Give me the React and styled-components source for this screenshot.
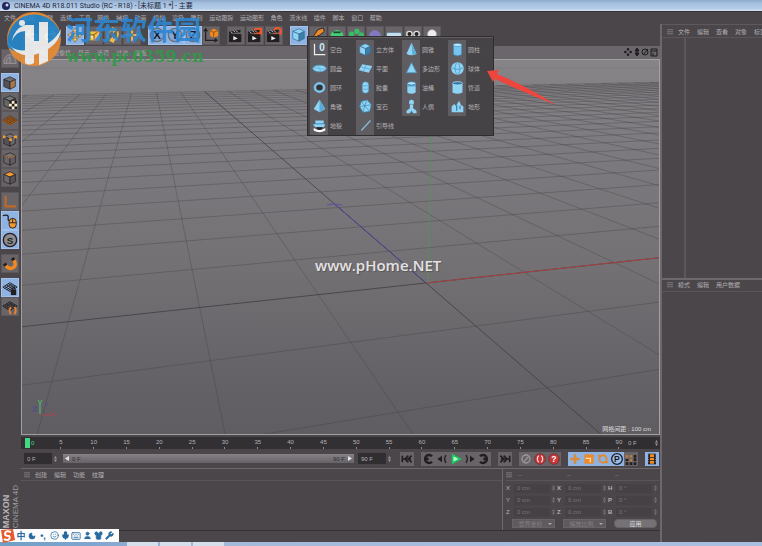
import React from "react";
import styled, { createGlobalStyle, css } from "styled-components";
import { Keyboard, Mic, Moon, Shirt, Smile, User, Wrench } from "lucide-react";

const GlobalStyle = createGlobalStyle`
  * { box-sizing: border-box; }
  body {
    margin: 0;
    background: #4a464a;
    font-family: "Liberation Sans", "Noto Sans CJK SC", sans-serif;
    font-size: 6px;
    line-height: 10px;
    color: #b4b1b4;
  }
  button, input, select { font: inherit; color: inherit; margin: 0; padding: 0; border: 0; }
  button { background: none; white-space: nowrap; }
  svg { display: block; }
`;

const Page = styled.div`
  position: relative;
  display: flex;
  flex-direction: column;
  height: 100vh;
  overflow: hidden;
`;

const TitleBar = styled.header`
  display: flex;
  align-items: center;
  gap: 4px;
  height: 12px;
  flex: none;
  padding-left: 2px;
  font-family: Roboto, "Noto Sans CJK SC", sans-serif;
  font-size: 7px;
  color: #1c2638;
  background: linear-gradient(#8fa9c8, #a5c0e0 30%, #b4cbe6 80%, #dbe6f2);
  border-bottom: 1px solid #353238;
  white-space: pre;
`;

const MenuBar = styled.nav`
  display: flex;
  align-items: center;
  justify-content: space-between;
  max-width: 384px;
  height: 12px;
  flex: none;
  padding: 0 2px 0 4px;
`;

const Body = styled.main`
  display: flex;
  flex: 1;
  min-height: 0;
`;

const Workspace = styled.div`
  display: flex;
  flex-direction: column;
  flex: 1;
  min-width: 0;
`;

const Toolbar = styled.div`
  display: flex;
  align-items: center;
  gap: 7px;
  height: 22px;
  flex: none;
  padding-left: 23px;
`;

const ToolGroup = styled.div`
  display: flex;
  flex-direction: ${(p) => (p.$column ? "column" : "row")};
  gap: ${(p) => p.$gap || 0}px;
`;

const Tool = styled.button`
  display: grid;
  place-items: center;
  width: 18px;
  height: 19px;
  background: ${(p) => (p.$active ? "#8fb4e4" : "#686468")};
  border: 1px solid ${(p) => (p.$active ? "#a3c2ea" : "#5b575b")};
`;

const Stage = styled.div`
  display: flex;
  flex: 1;
  min-height: 0;
`;

const SideTools = styled.aside`
  display: flex;
  flex-direction: column;
  gap: 5px;
  width: 21px;
  flex: none;
  padding: 3px 0 0 1px;
`;

const Brand = styled.div`
  margin-top: auto;
  padding-top: 14px;
  writing-mode: vertical-rl;
  transform: rotate(180deg);
  font-size: 8px;
  line-height: 9px;
  color: #a29fa3;
  white-space: nowrap;
  b { font-size: 9px; color: #b9b6b9; }
`;

const Center = styled.div`
  display: flex;
  flex-direction: column;
  flex: 1;
  min-width: 0;
`;

const ViewHeader = styled.div`
  display: flex;
  align-items: center;
  gap: 7px;
  height: 13px;
  flex: none;
  padding: 0 2px 0 13px;
  background: #6a666b;
  color: #aaa7aa;
`;

const ViewNav = styled.div`
  display: flex;
  gap: 1px;
  margin-left: auto;
  color: #1e1c1e;
`;

const Viewport = styled.section`
  position: relative;
  flex: 1;
  min-height: 0;
  border: 1px solid #a3a0a4;
  background: linear-gradient(#878488, #7e7b80 22%, #747175 55%, #656267 85%, #605d62);
  > svg { width: 100%; height: 100%; }
`;

const GridInfo = styled.span`
  position: absolute;
  right: 8px;
  bottom: 0;
  color: #dedcde;
`;

const Ruler = styled.div`
  display: flex;
  align-items: center;
  gap: 6px;
  height: 12px;
  flex: none;
  margin-top: 2px;
  padding-left: 7px;
  background: #333034;
`;

const Marks = styled.div`
  display: flex;
  justify-content: space-between;
  align-items: flex-start;
  flex: 1;
  height: 12px;
`;

const Mark = styled.span`
  display: flex;
  flex-direction: column;
  align-items: center;
  width: 0;
  color: #b4b1b4;
  &::after { content: ""; width: 1px; height: 2px; flex: none; background: #8c898c; }
`;

const CurrentMark = styled.span`
  display: flex;
  align-items: center;
  gap: 1px;
  width: 0;
  color: #43d67c;
`;

const Playhead = styled.i`
  width: 5px;
  height: 10px;
  flex: none;
  margin: 1px 0 0 -3px;
  background: #45d884;
`;

const PlayRow = styled.div`
  display: flex;
  align-items: center;
  gap: 7px;
  height: 19px;
  flex: none;
  padding: 0 1px 0 3px;
`;

const FrameRange = styled.div`
  display: flex;
  align-items: center;
  gap: 4px;
  flex: 1;
`;

const Field = styled.label`
  display: flex;
  align-items: center;
  gap: 2px;
  min-width: 0;
  ${(p) => (p.$wide ? "flex: 1;" : "width: 35px; flex: none;")}
  height: ${(p) => (p.$wide ? 9 : 11)}px;
  padding-right: 2px;
  input {
    flex: 1;
    width: 0;
    min-width: 0;
    height: 100%;
    padding-left: 3px;
    background: ${(p) => (p.$wide ? "#454145" : "#312e32")};
    color: ${(p) => (p.$wide ? "#7b777b" : "#b4b1b4")};
  }
  svg { flex: none; color: ${(p) => (p.$wide ? "#777377" : "#9b989b")}; }
`;

const Range = styled.div`
  display: flex;
  align-items: center;
  justify-content: space-between;
  flex: 1;
  height: 9px;
  padding: 0 2px;
  background: linear-gradient(#858286, #666267);
  color: #302d31;
  span { display: flex; align-items: center; gap: 3px; }
  svg { color: #e6e4e6; }
`;

const Transport = styled.div`
  ${Tool} { width: 14px; height: 14px; border-width: 0; }
`;

const Lower = styled.div`
  display: flex;
  height: 63px;
  flex: none;
  border-top: 1px solid #6c686c;
  border-bottom: 1px solid #343136;
`;

const Materials = styled.section`
  flex: 1;
  border-right: 1px solid #6c686c;
`;

const PanelMenu = styled.div`
  display: flex;
  align-items: center;
  gap: 7px;
  height: 12px;
  flex: none;
  padding-left: ${(p) => p.$inset || 3}px;
  border-bottom: 1px solid #595559;
`;

const Handle = styled.i`
  width: 6px;
  height: 6px;
  flex: none;
  margin-right: -2px;
  background: repeating-linear-gradient(#6d696d 0 1px, #575357 1px 2px);
`;

const Coordinates = styled.section`
  width: 157px;
  flex: none;
  padding: 0 1px 0 3px;
`;

const CoordHead = styled.div`
  display: grid;
  grid-template-columns: 12px 49px 48px 1fr;
  align-items: center;
  height: 12px;
  color: #8b878b;
  border-bottom: 1px solid #595559;
  margin-bottom: 1px;
`;

const CoordRow = styled.div`
  display: grid;
  grid-template-columns: repeat(3, minmax(0, 1fr));
  align-items: center;
  height: 12px;
`;

const CoordCell = styled.div`
  display: flex;
  align-items: center;
  gap: 3px;
  min-width: 0;
  > span { width: 5px; flex: none; font-weight: ${(p) => (p.$bold ? 700 : 400)}; }
`;

const CoordActions = styled.div`
  display: grid;
  grid-template-columns: 43px 43px 43px;
  justify-content: space-between;
  padding: 1px 2px 0 6px;
  select, button {
    height: 9px;
    line-height: 8px;
    text-align: center;
    background: #5e5a5e;
    border: 1px solid #676367;
    color: #858185;
  }
  select { appearance: none; padding: 0 9px 0 3px; }
  button { background: #757175; color: #dcdadc; border-radius: 4px; }
`;

const SelectBox = styled.div`
  position: relative;
  display: grid;
  &::after {
    content: "";
    position: absolute;
    right: 3px;
    top: 4px;
    border: 2px solid transparent;
    border-top-color: #aaa;
  }
`;

const Status = styled.div`
  height: 11px;
  flex: none;
`;

const Managers = styled.aside`
  display: flex;
  flex-direction: column;
  width: 102px;
  flex: none;
  border-left: 2px solid #6c686c;
  overflow: hidden;
`;

const ObjectManager = styled.section`
  display: flex;
  flex-direction: column;
  flex: 24;
  padding-top: 1px;
  border-top: 1px solid #5d595d;
`;

const ObjectColumns = styled.div`
  flex: 1;
  width: 24px;
  border-right: 2px solid #5b575b;
`;

const Attributes = styled.section`
  flex: 25;
  border-top: 2px solid #6c686c;
`;

const Taskbar = styled.footer`
  display: flex;
  gap: 2px;
  height: 4px;
  flex: none;
  padding-left: 127px;
  background: linear-gradient(90deg, #6f9fc4, #7fa5cf 12%, #a4b9d8 25%, #aabfe0);
  i { width: 31px; background: #d5dfec; }
`;

const Popup = styled.div`
  position: absolute;
  left: 307px;
  top: 36px;
  display: grid;
  grid-template-columns: repeat(3, 46px) 45px;
  padding: 3px 0 0 2px;
  background: #464347;
  border: 1px solid #302d31;
  box-shadow: inset 0 1px #615d61;
`;

const PopupItem = styled.button`
  display: flex;
  align-items: center;
  gap: 2px;
  height: 19px;
  > span { display: grid; place-items: center; width: 18px; height: 19px; background: #5f5d61; }
`;

const overlay = css`
  position: absolute;
  white-space: nowrap;
  pointer-events: none;
`;

const SiteMark = styled.div`
  ${overlay}
  left: 5px;
  top: 10px;
  display: flex;
  gap: 4px;
  opacity: 0.9;
`;

const SiteText = styled.div`
  padding-top: 4px;
  font: 700 27px/30px "Noto Sans CJK SC", sans-serif;
  color: #2d86d2;
  small { display: block; font: 700 16px/25px "DejaVu Serif", serif; color: #2f9a48; }
`;

const HomeMark = styled.div`
  ${overlay}
  left: 315px;
  top: 255px;
  font: 600 15px/20px "Open Sans", sans-serif;
  color: #e4e2e4;
  text-shadow: 1px 1px 1px #555;
`;

const Arrow = styled.svg`
  ${overlay}
  left: 485px;
  top: 68px;
`;

const InputBar = styled.div`
  position: absolute;
  left: 0;
  bottom: 4px;
  display: flex;
  align-items: center;
  gap: 1px;
  height: 13px;
  padding-right: 5px;
  background: #fdfdfd;
  color: #27699e;
  font-size: 9px;
  font-weight: 700;
  button { display: grid; place-items: center; width: 10px; height: 13px; }
`;

const B = "#8fd3f5";
const D = "#397fa9";
const O = "#f49a35";
const K = "#211f22";

const Cube = ({ top = B, left = B, right = D, line = "#3a6e91" }) => (
  <g stroke={line} strokeWidth=".8" strokeLinejoin="round">
    <path d="M2 5 9 2l6 3-6 3z" fill={top} />
    <path d="M2 5l7 3v8l-7-3z" fill={left} />
    <path d="M15 5 9 8v8l6-3z" fill={right} />
  </g>
);

const Clapper = ({ children }) => (
  <g>
    {children}
    <path d="M1 8h14v9H1z" fill={K} />
    <path d="M1 5l13-2v3L1 8z" fill={K} />
    <path d="M3 5l2 2m1-3 2 2m1-2 2 2" stroke="#ddd" />
    <path d="M6 10v5l5-2z" fill="#eee" />
  </g>
);

const Floor = ({ color = K }) => (
  <g stroke={color} strokeWidth="1" fill="none">
    <path d="M1 8l8-5 8 5-8 5zM3 9.500l8-5M5 11l8-5M7 12l8-5M3 7l8 5M5 5.500l8 5M7 4l8 5" />
  </g>
);

const Letter = ({ children }) => (
  <g>
    <circle cx="9" cy="9" r="7.500" fill="#7ea5d8" stroke="#6d6f72" strokeWidth="1.500" />
    <text x="9" y="13.500" fontSize="13" fontWeight="700" textAnchor="middle" fill="#14171d">{children}</text>
  </g>
);

const Gray = "#777175";
const shapes = {
  undo: <path d="M4 8h7a3 3 0 010 6H8M7 4 3 8l4 4" stroke="#bbb" fill="none" strokeWidth="2" />,
  redo: <path d="M14 8H7a3 3 0 000 6h3M11 4l4 4-4 4" stroke="#bbb" fill="none" strokeWidth="2" />,
  move: <path d="M9 1l3 4h-2v3h3V6l4 3-4 3v-2h-3v3h2l-3 4-3-4h2v-3H5v2L1 9l4-3v2h3V5H6z" fill="#f6c654" stroke="#665322" strokeWidth=".6" />,
  scale: <g><path d="M3 5h12v10H3z" fill="#f7bd43" /><path d="M3 9h6v6M8 9l5-3" stroke="#704b12" fill="#fce09a" /></g>,
  rotate: <g fill="none" stroke="#f2bd46" strokeWidth="2"><path d="M4 13A7 7 0 0110 3M14 5a7 7 0 01-6 10" /><path d="M8 1l4 2-3 3M10 17l-4-2 3-3" /></g>,
  plus: <path d="M9 2v14M2 9h14" stroke="#f5b33d" strokeWidth="2.500" />,
  x: <Letter>X</Letter>, y: <Letter>Y</Letter>, z: <Letter>Z</Letter>,
  coord: <g><path d="M3 3v12h12M1 5l2-3 2 3M13 13l3 2-3 2" fill="none" stroke={K} strokeWidth="1.300" /><path d="M8 4l4-2 5 2v6l-5 2-4-2z" fill="#ee8a22" /><path d="M8 4l4 2 5-2M12 6v6" stroke="#8f4b0c" fill="none" /></g>,
  render: <Clapper />,
  renderPic: <Clapper><path d="M8 1h9v8H8z" fill="#e9572a" /></Clapper>,
  renderSet: <Clapper><circle cx="13" cy="5" r="4" fill="none" stroke="#e9572a" strokeWidth="2.500" /></Clapper>,
  cube: <Cube />,
  pen: <path d="M2 13 9 3l6-2 1 4-5 4z" fill="#f08a24" stroke="#272427" />,
  nurbs: <g><path d="M2 8q7-9 14 0v4H2z" fill="#45cf77" /><path d="M5 6h8" stroke="#174b2a" strokeWidth="2" /></g>,
  array: <g fill="#39bd67"><circle cx="4" cy="8" r="3" /><circle cx="10" cy="5" r="3" /><circle cx="15" cy="9" r="3" /></g>,
  bend: <path d="M2 12C2 1 15 1 16 11l-6 1z" fill="#827ac1" />,
  floor: <path d="M1 6h16l1 6H0z" fill="#c6dcea" stroke="#547289" />,
  camera: <g fill="#222" stroke="#ddd" strokeWidth="1.500"><circle cx="5" cy="8" r="3" /><circle cx="13" cy="8" r="3" /></g>,
  light: <circle cx="9" cy="8" r="5" fill="#eee" stroke="#aaa" />,
  convert: <g fill={Gray} stroke="#9a969a"><path d="M2 14q0-9 7-10 6 1 7 10z" /><path d="M5 14q0-6 4-7M9 14V7" fill="none" /></g>,
  model: <Cube top="#716e70" left="#555155" right="#a8784c" line="#272427" />,
  texture: <g><Cube top="#777" left="#666" right="#4d494d" line={K} /><path d="M8 8h9v9H8z" fill="#fff1cd" /><path d="M8 8h3v3H8zm6 0h3v3h-3zm-3 3h3v3h-3zm-3 3h3v3H8zm6 0h3v3h-3z" fill={K} /></g>,
  plane: <g><path d="M0 9l9-5 9 5-9 5z" fill="#a76326" /><Floor color="#6e3f17" /></g>,
  points: <g><Cube top="#777" left="#545054" right="#686468" line={K} /><path d="M1 4h3v3H1zm7 3h3v3H8zm5-3h4v3h-4z" fill={O} /></g>,
  edges: <g><Cube top="#777" left="#696569" right="#625e62" line={K} /><path d="M2 5l7 3 6-3" fill="none" stroke="#c47b36" /></g>,
  polys: <Cube top={O} left="#6c686c" right="#585458" line={K} />,
  axis: <path d="M4 2v12h12" stroke="#bd692c" strokeWidth="2.500" fill="none" />,
  mouse: <g><path d="M1 3q7-2 6 3-1 3 3 2" stroke={K} fill="none" strokeWidth="1.500" /><rect x="8" y="6" width="8" height="11" rx="4" fill={O} stroke={K} /><path d="M12 6v5M8 11h8" stroke={K} /></g>,
  snap: <g><circle cx="9" cy="9" r="7.500" fill="#8d8b8e" stroke={K} strokeWidth="1.500" /><text x="9" y="13" fontSize="11" fontWeight="700" textAnchor="middle" fill={K}>S</text></g>,
  magnet: <g fill="none" strokeWidth="4"><path d="M4 7c0 10 12 10 11 0" stroke="#f18922" transform="rotate(-35 9 9)" /><path d="M4 8V5M15 8V5" stroke={K} transform="rotate(-35 9 9)" /></g>,
  lock: <g><Floor /><path d="M10 11h6v6h-6z" fill={K} /><path d="M11 11q2-5 4 0" fill="none" stroke={K} strokeWidth="1.500" /></g>,
  turn: <g><Floor /><path d="M10 9q-3 4 0 8M14 9q3 4 0 8" stroke="#e8842d" strokeWidth="2" fill="none" /></g>,
  null: <g><path d="M3 2v13h13" stroke="#eee" strokeWidth="1.500" fill="none" /><text x="12" y="11" fontSize="12" fontWeight="700" textAnchor="middle" fill="#cbeaff">0</text></g>,
  cone: <g><path d="M9 1l6 13q-6 4-12 0z" fill={B} /><path d="M9 1l6 13-5 2z" fill="#5bafd9" /></g>,
  cylinder: <g><path d="M4 3v12q5 3 10 0V3z" fill="#76c4ef" stroke={D} strokeWidth=".7" /><ellipse cx="9" cy="3.500" rx="5" ry="2" fill="#b6e7ff" stroke={D} strokeWidth=".7" /></g>,
  disc: <g><ellipse cx="9" cy="9" rx="8" ry="4" fill={B} stroke="#4e9bc8" /><path d="M2 8l14 2M7 5l4 8" stroke="#64b2da" /></g>,
  flat: <g><path d="M5 4l12 2-4 8-12-3z" fill={B} /><path d="M4 7l11 3M10 5l-4 8" stroke="#5aa6d0" /></g>,
  triangle: <path d="M9 2l6 12H3z" fill={B} stroke="#4e9bc8" />,
  sphere: <g><circle cx="9" cy="9" r="7.500" fill={B} /><path d="M2 8q7 4 14 0M8 2q-4 6 0 14M10 2q4 7 0 14" fill="none" stroke="#4b9bc8" /></g>,
  torus: <ellipse cx="9" cy="9" rx="5.500" ry="5" fill="#333" stroke="#7cc3ea" strokeWidth="3" />,
  capsule: <g><rect x="5" y="2" width="8" height="14" rx="4" fill={B} stroke={D} strokeWidth=".7" /><path d="M5 7h8M5 11h8" stroke="#5aa6d0" /></g>,
  tank: <g><path d="M4 5v10q5 3 10 0V5z" fill={B} /><ellipse cx="9" cy="4" rx="5" ry="2" fill="#b6e7ff" stroke={D} /><path d="M4 7h10" stroke={D} /></g>,
  tube: <g><path d="M3 4v11q6 3 12 0V4z" fill={B} /><ellipse cx="9" cy="4" rx="6" ry="2" fill="#39729c" stroke="#a5def9" /></g>,
  pyramid: <g><path d="M9 1 2 12l7 4 7-4z" fill={B} /><path d="M9 1v15l7-4z" fill="#5cabd6" /></g>,
  gem: <g fill={B} stroke={D} strokeWidth=".8"><path d="M4 3l7-2 5 6-2 8-8 1-4-7z" /><path d="M4 3l4 5 8-1M8 8l-2 8M8 8l6 7M2 9l6-1 3-7" /></g>,
  figure: <g fill={B}><circle cx="9" cy="4" r="3" /><path d="M7 7h4v4l4 3v3h-4l-2-3-2 3H3v-3l4-3z" /></g>,
  relief: <g><path d="M2 16V9l3-3 2 2 4-6 2 5 3 2v7z" fill={B} /><path d="M8 7v7M12 8v4" stroke={D} strokeWidth="1.500" /></g>,
  landscape: <g><path d="M4 3h10v4l2 1-2 3H4L1 8l3-1z" fill={B} /><path d="M3 7h12" stroke={D} /><path d="M2 12q7 5 14 0v3q-7 4-14 0z" fill="#fff" /><path d="M5 11h8l-2 3H7z" fill={K} /></g>,
  guide: <path d="M4 15L15 3" stroke="#85bed9" strokeWidth="1.500" />,
  first: <path d="M2 4v10M16 4l-5 5 5 5M11 4L6 9l5 5M3 9h12" stroke={K} strokeWidth="2.500" fill="none" />,
  last: <path d="M16 4v10M2 4l5 5-5 5M7 4l5 5-5 5M3 9h12" stroke={K} strokeWidth="2.500" fill="none" />,
  prevKey: <path d="M15 5a6 6 0 100 8M3 9h7" stroke={K} strokeWidth="3.500" fill="none" />,
  nextKey: <path d="M3 5a6 6 0 110 8M15 9H8" stroke={K} strokeWidth="3.500" fill="none" />,
  prev: <g><path d="M9 4v10L2 9z" fill={K} /><path d="M15 3q-4 6 0 12" stroke={K} strokeWidth="2" fill="none" /></g>,
  next: <g><path d="M9 4v10l7-5z" fill={K} /><path d="M3 3q4 6 0 12" stroke={K} strokeWidth="2" fill="none" /></g>,
  play: <path d="M4 3v12l11-6z" fill="#b7ffd3" stroke="#18c95f" strokeWidth="2.500" />,
  record: <g fill="none" stroke="#9b979b" strokeWidth="2"><circle cx="9" cy="9" r="6" /><path d="M6 13l7-8" /></g>,
  auto: <g><circle cx="9" cy="9" r="8" fill="#c7373a" stroke="#69282c" /><path d="M7 4q-4 5 0 10M11 4q4 5 0 10" stroke="#ffdada" strokeWidth="1.800" fill="none" /></g>,
  query: <g><circle cx="9" cy="9" r="8" fill="#c7373a" stroke="#69282c" /><text x="9" y="14" fontSize="13" fontWeight="700" textAnchor="middle" fill="#fff">?</text></g>,
  keyPos: <path d="M9 2v14M2 9h14" stroke="#d98b39" strokeWidth="4" />,
  keyScale: <g><path d="M2 2h14v14H2z" fill="#ec8b27" /><path d="M4 8h7v6" stroke="#ffe0ac" fill="none" strokeWidth="2" /></g>,
  keyRot: <g fill="none" stroke="#d98b39" strokeWidth="3"><circle cx="9" cy="9" r="5.500" /><path d="M1 4h6M11 14h6" /></g>,
  keyParam: <g><circle cx="9" cy="9" r="8" fill="#9abcec" stroke={K} strokeWidth="2" /><text x="9" y="14" fontSize="13" fontWeight="700" textAnchor="middle" fill={K}>P</text></g>,
  keyPoint: <g><path d="M1 3h4v4H1zm6 0h4v4H7zm0 6h4v4H7z" fill="#b87a3c" /><path d="M13 3h4v4h-4zm0 5h4v4h-4zM1 9h4v3H1zm0 5h4v4H1zm6 0h4v4H7zm6 0h4v4h-4z" fill={K} /></g>,
  film: <g><path d="M3 1h12v16H3z" fill={K} /><path d="M6 2h6v4H6zm0 5h6v4H6zm0 5h6v4H6z" fill="#ec8b27" /><path d="M4 2v14M14 2v14" stroke="#bbb" strokeDasharray="1.500 2" /></g>,
};

const Icon = ({ name, size = 16 }) => (
  <svg width={size} height={size} viewBox="0 0 18 18" aria-hidden="true">{shapes[name]}</svg>
);

const Tools = ({ items, active = [], column, gap, size }) => (
  <ToolGroup $column={column} $gap={gap}>
    {items.map((name) => (
      <Tool key={name} aria-label={name} $active={active.includes(name)}>
        <Icon name={name} size={size} />
      </Tool>
    ))}
  </ToolGroup>
);

const Keys = (props) => <Transport><Tools size={12} {...props} /></Transport>;

const Spin = () => (
  <svg width="3" height="6" viewBox="0 0 3 6" fill="currentColor"><path d="M0 2.500 1.500 0 3 2.500zM0 3.500 1.500 6 3 3.500z" /></svg>
);

const NumberField = ({ label, value, wide }) => (
  <Field $wide={wide}>
    <input aria-label={label} defaultValue={value} />
    <Spin />
  </Field>
);

const Buttons = ({ items }) => items.map((text) => <button key={text}>{text}</button>);

// Perspective floor: cells are projected between two vanishing points.
const ORIGIN = [426, 283];
const VP_X = [2660, 41];
const VP_Z = [146, 41];
const EXTENT = 25;

const weight = (i, j) => 1 + i * 0.046 + j * 0.151;
const project = (i, j) => {
  const w = weight(i, j);
  return [0, 1].map((k) => (ORIGIN[k] + i * 0.046 * VP_X[k] + j * 0.151 * VP_Z[k]) / w);
};
const segment = (a, b) => `M${project(...a).join(" ")}L${project(...b).join(" ")}`;

const floorLines = [];
for (let n = -EXTENT; n <= EXTENT; n++) {
  const nearZ = Math.max(-EXTENT, (0.25 - 1 - n * 0.046) / 0.151);
  const nearX = Math.max(-EXTENT, (0.25 - 1 - n * 0.151) / 0.046);
  floorLines.push({ key: `z${n}`, axis: n === 0, d: segment([n, nearZ], [n, EXTENT]) });
  if (nearX < EXTENT + 4) floorLines.push({ key: `x${n}`, axis: n === 0, d: segment([nearX, n], [EXTENT + 4, n]) });
}

const Scene = () => (
  <svg viewBox="22 60 637 374" preserveAspectRatio="xMidYMid slice" fill="none">
    <path d="M0 68h700" stroke="#7e7b80" />
    {floorLines.map((l) => (
      <path key={l.key} d={l.d} stroke="#3e3b40" strokeWidth={l.axis ? 1 : 0.8} opacity={l.axis ? 0.75 : 0.42} />
    ))}
    <path d={segment([0, 0], [12, 0])} stroke="#a6403f" />
    <path d={segment([0, 0], [0, 3.2])} stroke="#4a4295" />
    <path d="M327 205l7-1 8 1" stroke="#5751a5" />
    <path d="M431 130l-3 153" stroke="#4b9853" strokeDasharray="14 1" opacity=".8" />
    <path d="M40 414v-10" stroke="#4bc46b" />
    <path d="M38 400l2 3 2-3M40 403v2" stroke="#4bc46b" />
    <path d="M41 415h9M51 412l4 4m0-4-4 4" stroke="#a94750" />
    <path d="M33 407h4l-4 4h4M45 405l3-1" stroke="#4d4b9a" />
  </svg>
);

const Logo = () => (
  <svg width="57" height="57" viewBox="0 0 57 57">
    <circle cx="29" cy="29" r="27" fill="#ea8d35" />
    <path d="M3 37A27 27 0 0156 26Q42 43 22 43 9 43 3 37z" fill="#2588cb" />
    <path d="M20 15h9v38q-5 3-9 0zM34 12h9v39l-9 4z" fill="#f5f6f6" />
    <path d="M29 31h5v8h-5z" fill="#f5f6f6" />
    <path d="M2 31q5 13 26 8 20-4 28-20-1 16-21 24-22 8-33-12z" fill="#f5f6f6" />
    <path d="M20 15Q9 19 7 31q4-10 13-10z" fill="#f5f6f6" />
    <circle cx="17" cy="13" r="3" fill="#f5f6f6" />
  </svg>
);

const mainMenu = ["文件", "编辑", "创建", "选择", "工具", "网格", "捕捉", "动画", "模拟", "渲染", "雕刻", "运动跟踪", "运动图形", "角色", "流水线", "插件", "脚本", "窗口", "帮助"];

const primitives = [
  ["null", "空白"], ["cube", "立方体"], ["cone", "圆锥"], ["cylinder", "圆柱"],
  ["disc", "圆盘"], ["flat", "平面"], ["triangle", "多边形"], ["sphere", "球体"],
  ["torus", "圆环"], ["capsule", "胶囊"], ["tank", "油桶"], ["tube", "管道"],
  ["pyramid", "角锥"], ["gem", "宝石"], ["figure", "人偶"], ["relief", "地形"],
  ["landscape", "地貌"], ["guide", "引导线"],
];

const coordinates = [
  ["X", "X", "H"],
  ["Y", "Y", "P"],
  ["Z", "Z", "B"],
];

const frames = Array.from({ length: 18 }, (_, i) => (i + 1) * 5);

function Timeline() {
  return (
    <>
      <Ruler>
        <Marks>
          <CurrentMark><Playhead />0</CurrentMark>
          {frames.map((f) => <Mark key={f}>{f}</Mark>)}
        </Marks>
        <NumberField label="当前帧" value="0 F" />
      </Ruler>
      <PlayRow>
        <FrameRange>
          <NumberField label="起始帧" value="0 F" />
          <Range>
            <span><svg width="4" height="5" viewBox="0 0 4 5"><path d="M4 0v5L0 2.500z" fill="currentColor" /></svg>0 F</span>
            <span>90 F<svg width="4" height="5" viewBox="0 0 4 5"><path d="M0 0v5l4-2.500z" fill="currentColor" /></svg></span>
          </Range>
          <NumberField label="结束帧" value="90 F" />
        </FrameRange>
        <Keys items={["first"]} />
        <Keys items={["prevKey", "prev", "play", "next", "nextKey"]} />
        <Keys items={["last"]} />
        <Keys items={["record", "auto", "query"]} />
        <Keys items={["keyPos", "keyScale", "keyRot", "keyParam", "keyPoint"]} active={["keyPos", "keyScale", "keyRot", "keyParam"]} />
        <Keys items={["film"]} active={["film"]} />
      </PlayRow>
    </>
  );
}

function CoordinatePanel() {
  return (
    <Coordinates>
      <CoordHead><Handle /><span>--</span><span>--</span><span>--</span></CoordHead>
      {coordinates.map((row) => (
        <CoordRow key={row[0]}>
          {row.map((axis, i) => (
            <CoordCell key={i} $bold={i > 0}>
              <span>{axis}</span>
              <NumberField wide label={`${axis} ${i + 1}`} value={i === 2 ? "0 °" : "0 cm"} />
            </CoordCell>
          ))}
        </CoordRow>
      ))}
      <CoordActions>
        <SelectBox><select aria-label="坐标"><option>世界坐标</option></select></SelectBox>
        <SelectBox><select aria-label="缩放"><option>缩放比例</option></select></SelectBox>
        <button>应用</button>
      </CoordActions>
    </Coordinates>
  );
}

function App() {
  return (
    <Page>
      <GlobalStyle />
      <TitleBar>
        <svg width="8" height="8" viewBox="0 0 8 8"><circle cx="4" cy="4" r="4" fill="#22265e" /><circle cx="5" cy="3" r="1.500" fill="#cdd8ee" /></svg>
        CINEMA 4D R18.011 Studio (RC - R18) - [未标题 1 *] - 主要
      </TitleBar>
      <MenuBar><Buttons items={mainMenu} /></MenuBar>
      <Body>
        <Workspace>
          <Toolbar>
            <Tools items={["undo", "redo"]} />
            <Tools items={["move", "scale", "rotate", "plus"]} active={["move"]} gap={1} />
            <Tools items={["x", "y", "z", "coord"]} active={["x", "y", "z"]} />
            <Tools items={["render", "renderPic", "renderSet"]} gap={1} />
            <Tools items={["cube", "pen", "nurbs", "array", "bend", "floor", "camera", "light"]} active={["cube"]} gap={1} />
          </Toolbar>
          <Stage>
            <SideTools>
              <Tools column items={["convert"]} />
              <Tools column items={["model", "texture", "plane", "points", "edges", "polys"]} active={["model"]} />
              <Tools column items={["axis", "mouse", "snap"]} active={["mouse", "snap"]} />
              <Tools column items={["magnet"]} />
              <Tools column items={["lock", "turn"]} active={["lock"]} />
              <Brand><b>MAXON</b><div>CINEMA 4D</div></Brand>
            </SideTools>
            <Center>
              <ViewHeader>
                <Buttons items={["查看", "摄像机", "显示", "选项", "过滤", "面板"]} />
                <ViewNav>
                  <svg width="35" height="9" viewBox="0 0 35 9" fill="currentColor" stroke="currentColor" strokeWidth="1">
                    <path d="M5 0l1 2H4zM5 8l1-2H4zM1 4l2-1v2zM9 4 7 3v2zM14 0l2 3h-4zM14 8l2-3h-4zM14 1v7" />
                    <circle cx="22" cy="4" r="3" fill="none" /><path d="M20 7l5-6M28 1h6v7h-6zM28 3h6M30 5v3" fill="none" />
                  </svg>
                </ViewNav>
              </ViewHeader>
              <Viewport>
                <Scene />
                <GridInfo>网格间距 : 100 cm</GridInfo>
              </Viewport>
              <Timeline />
              <Lower>
                <Materials>
                  <PanelMenu><Handle /><Buttons items={["创建", "编辑", "功能", "纹理"]} /></PanelMenu>
                </Materials>
                <CoordinatePanel />
              </Lower>
              <Status />
            </Center>
          </Stage>
        </Workspace>
        <Managers>
          <ObjectManager>
            <PanelMenu $inset={5}><Handle /><Buttons items={["文件", "编辑", "查看", "对象", "标签"]} /></PanelMenu>
            <ObjectColumns />
          </ObjectManager>
          <Attributes>
            <PanelMenu $inset={5}><Handle /><Buttons items={["模式", "编辑", "用户数据"]} /></PanelMenu>
          </Attributes>
        </Managers>
      </Body>
      <Taskbar><i /><i /><i /></Taskbar>

      <Popup>
        {primitives.map(([icon, text]) => (
          <PopupItem key={icon}><span><Icon name={icon} size={15} /></span>{text}</PopupItem>
        ))}
      </Popup>
      <Arrow width="74" height="40" viewBox="0 0 74 40">
        <path d="M2 3l12-1-2 4q30 12 59 31Q38 24 10 11l-2 3z" fill="#ee453d" />
      </Arrow>
      <HomeMark>www.pHome.NET</HomeMark>
      <SiteMark>
        <Logo />
        <SiteText>河东软件园<small>www.pc0359.cn</small></SiteText>
      </SiteMark>
      <InputBar>
        <svg width="15" height="15" viewBox="0 0 15 15"><path d="M1 2l12-1 2 11-12 3z" fill="#e65a2d" /><path d="M11 4Q5 2 5 6q0 2 4 2 2 2-1 4-3 0-4-1" fill="none" stroke="#fff" strokeWidth="2" /></svg>
        <button>中</button>
        <button aria-label="moon"><Moon size={8} fill="currentColor" /></button>
        <button>•,</button>
        <button aria-label="smile"><Smile size={9} /></button>
        <button aria-label="voice"><Mic size={9} strokeWidth={3} fill="currentColor" /></button>
        <button aria-label="keyboard"><Keyboard size={10} /></button>
        <button aria-label="account"><User size={9} fill="currentColor" /></button>
        <button aria-label="skin"><Shirt size={9} fill="currentColor" /></button>
        <button aria-label="settings"><Wrench size={9} fill="currentColor" /></button>
      </InputBar>
    </Page>
  );
}

export default App;
